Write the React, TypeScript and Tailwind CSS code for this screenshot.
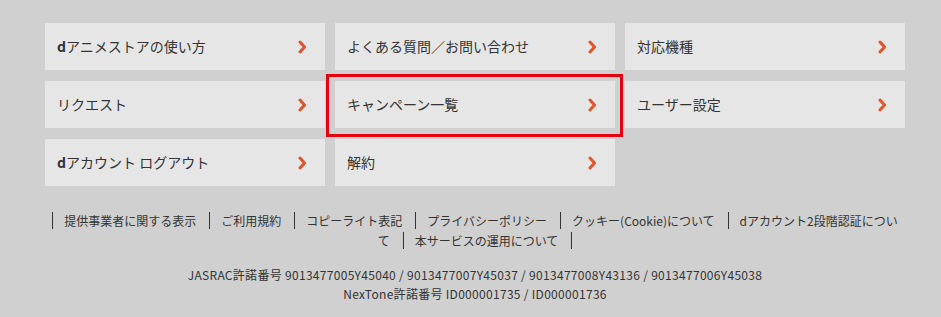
import React from "react";

const Chevron = () => (
  <svg width="9" height="14" viewBox="0 0 9 14" className="shrink-0">
    <polyline points="2,2 6.5,7 2,12" fill="none" stroke="#e2532b" strokeWidth="3" strokeLinecap="round" strokeLinejoin="round" />
  </svg>
);

const Card = ({ children, highlight }: { children: React.ReactNode; highlight?: boolean }) => (
  <div className="relative h-[47px] bg-[#e6e6e6] flex items-center justify-between pl-[12px] pr-[18px]">
    <span className="text-[14px] text-[#333]">{children}</span>
    <Chevron />
    {highlight && (
      <div className="absolute left-[-9px] right-[-8px] top-[-7px] bottom-[-9px] border-[3px] border-[#e8000f] pointer-events-none" />
    )}
  </div>
);

const links = [
  "提供事業者に関する表示",
  "ご利用規約",
  "コピーライト表記",
  "プライバシーポリシー",
  "クッキー(Cookie)について",
  "dアカウント2段階認証について",
  "本サービスの運用について",
];

export default function App() {
  return (
    <div
      className="w-[941px] h-[317px] bg-[#d0d0d0] pt-[23px] pl-[45px] overflow-hidden"
      style={{ fontFamily: '"Noto Sans CJK JP", "Noto Sans", sans-serif' }}
    >
      <div className="w-[860px]">
        <div className="grid grid-cols-3 gap-x-[10px] gap-y-[11px]">
          <Card><b className="font-bold">d</b>アニメストアの使い方</Card>
          <Card>よくある質問／お問い合わせ</Card>
          <Card>対応機種</Card>
          <Card>リクエスト</Card>
          <Card highlight>キャンペーン一覧</Card>
          <Card>ユーザー設定</Card>
          <Card><b className="font-bold">d</b>アカウント ログアウト</Card>
          <Card>解約</Card>
        </div>
        <div className="mt-[25px] px-[4px] text-center text-[12px] leading-[20px] text-[#333]">
          {links.map((l, i) => (
            <span key={i} className="border-l border-[#333] pl-[11px] pr-[13px]">{l}</span>
          ))}
          <span className="border-l border-[#333]"></span>
        </div>
        <div className="mt-[14px] text-center text-[12px] leading-[19px] tracking-[0.3px] text-[#333]">
          <div>JASRAC許諾番号 9013477005Y45040 / 9013477007Y45037 / 9013477008Y43136 / 9013477006Y45038</div>
          <div>NexTone許諾番号 ID000001735 / ID000001736</div>
        </div>
      </div>
    </div>
  );
}
